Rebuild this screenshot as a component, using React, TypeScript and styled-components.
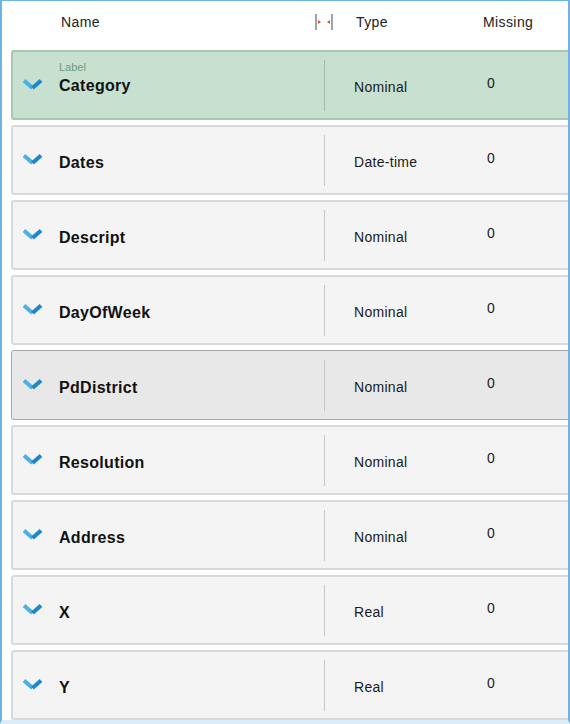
import React from "react";
import styled, { createGlobalStyle } from "styled-components";

const Global = createGlobalStyle`
  html, body { margin: 0; padding: 0; background: #ffffff; }
  body { font-family: "Liberation Sans", Arial, sans-serif; }
`;

const Frame = styled.div`
  box-sizing: border-box;
  width: 570px;
  height: 724px;
  border-top: 1px solid #6fb3e6;
  border-left: 2px solid #6fb3e6;
  border-right: 2px solid #6fb3e6;
  border-bottom: 4px solid #dcecf9;
  background: #ffffff;
  overflow: hidden;
  display: flex;
  flex-direction: column;
`;

const Header = styled.div`
  flex-shrink: 0;
  height: 49px;
  display: flex;
  align-items: flex-start;
  padding-top: 13px;
  box-sizing: border-box;
  font-size: 14px;
  letter-spacing: 0.4px;
  color: #222;
`;

const HeadName = styled.div`
  margin-left: 59px;
  width: 253px;
`;

const Resizer = styled.div`
  width: 20px;
  height: 20px;
  margin-top: -2px;
`;

const HeadType = styled.div`
  margin-left: 22px;
  width: 127px;
`;

const HeadMissing = styled.div``;

const List = styled.div`
  flex-shrink: 0;
  display: flex;
  flex-direction: column;
  gap: 5px;
  padding-left: 9px;
`;

const Card = styled.div<{ $variant: "green" | "plain" | "hover" }>`
  box-sizing: border-box;
  flex-shrink: 0;
  width: 600px;
  height: 70px;
  border-radius: 3px;
  border: ${(p) =>
    p.$variant === "green"
      ? "2px solid #a9c8b1"
      : p.$variant === "hover"
      ? "1px solid #a8a8a8"
      : "2px solid #d9d9d9"};
  background: ${(p) =>
    p.$variant === "green" ? "#c8e0cf" : p.$variant === "hover" ? "#e8e8e8" : "#f4f4f4"};
  display: grid;
  grid-template-columns: 46px 265px 1px 29px 133px 1fr;
  align-items: center;
  padding-left: ${(p) => (p.$variant === "hover" ? "1px" : "0")};
`;

const ChevronCell = styled.div`
  padding-left: 9px;
  display: flex;
  align-items: center;
  height: 100%;
  margin-top: -1px;
`;

const NameCell = styled.div`
  display: flex;
  flex-direction: column;
  justify-content: center;
  padding-top: 4px;
`;

const SubLabel = styled.div`
  font-size: 11px;
  color: #6f9a7b;
  line-height: 12px;
  margin-top: -18px;
  margin-bottom: 3px;
`;

const Name = styled.div`
  font-size: 16px;
  font-weight: bold;
  letter-spacing: 0.3px;
  color: #111;
  line-height: 19px;
`;

const Divider = styled.div<{ $green?: boolean }>`
  width: 1px;
  height: 51px;
  background: ${(p) => (p.$green ? "#9ebfa7" : "#c6c6c6")};
`;

const TypeCell = styled.div`
  grid-column: 5;
  font-size: 14px;
  letter-spacing: 0.3px;
  color: #1a1a1a;
  padding-top: 3px;
`;

const MissingCell = styled.div`
  font-size: 14px;
  color: #1a1a1a;
  margin-top: -4px;
`;

const Chevron = () => (
  <svg width="21" height="13" viewBox="0 0 21 13">
    <line x1="2" y1="2.5" x2="10.5" y2="10" stroke="#4bb0e2" strokeWidth="4" strokeLinecap="butt" />
    <line x1="10.5" y1="10" x2="19" y2="2.5" stroke="#1e87c9" strokeWidth="4" strokeLinecap="butt" />
  </svg>
);

const ResizeIcon = () => (
  <svg width="20" height="20" viewBox="0 0 20 20">
    <rect x="1" y="2" width="2" height="16" fill="#9aa5af" />
    <rect x="17" y="2" width="2" height="16" fill="#9aa5af" />
    <polygon points="4,8 7,10 4,12" fill="#e0502a" />
    <polygon points="16,8 13,10 16,12" fill="#e0502a" />
  </svg>
);

type Row = { name: string; type: string; label?: string; variant: "green" | "plain" | "hover" };

const rows: Row[] = [
  { name: "Category", type: "Nominal", label: "Label", variant: "green" },
  { name: "Dates", type: "Date-time", variant: "plain" },
  { name: "Descript", type: "Nominal", variant: "plain" },
  { name: "DayOfWeek", type: "Nominal", variant: "plain" },
  { name: "PdDistrict", type: "Nominal", variant: "hover" },
  { name: "Resolution", type: "Nominal", variant: "plain" },
  { name: "Address", type: "Nominal", variant: "plain" },
  { name: "X", type: "Real", variant: "plain" },
  { name: "Y", type: "Real", variant: "plain" },
];

export default function App() {
  return (
    <>
      <Global />
      <Frame>
        <Header>
          <HeadName>Name</HeadName>
          <Resizer>
            <ResizeIcon />
          </Resizer>
          <HeadType>Type</HeadType>
          <HeadMissing>Missing</HeadMissing>
        </Header>
        <List>
          {rows.map((r) => (
            <Card key={r.name} $variant={r.variant}>
              <ChevronCell>
                <Chevron />
              </ChevronCell>
              <NameCell>
                {r.label && <SubLabel>{r.label}</SubLabel>}
                <Name>{r.name}</Name>
              </NameCell>
              <Divider $green={r.variant === "green"} />
              <TypeCell>{r.type}</TypeCell>
              <MissingCell>0</MissingCell>
            </Card>
          ))}
        </List>
      </Frame>
    </>
  );
}
